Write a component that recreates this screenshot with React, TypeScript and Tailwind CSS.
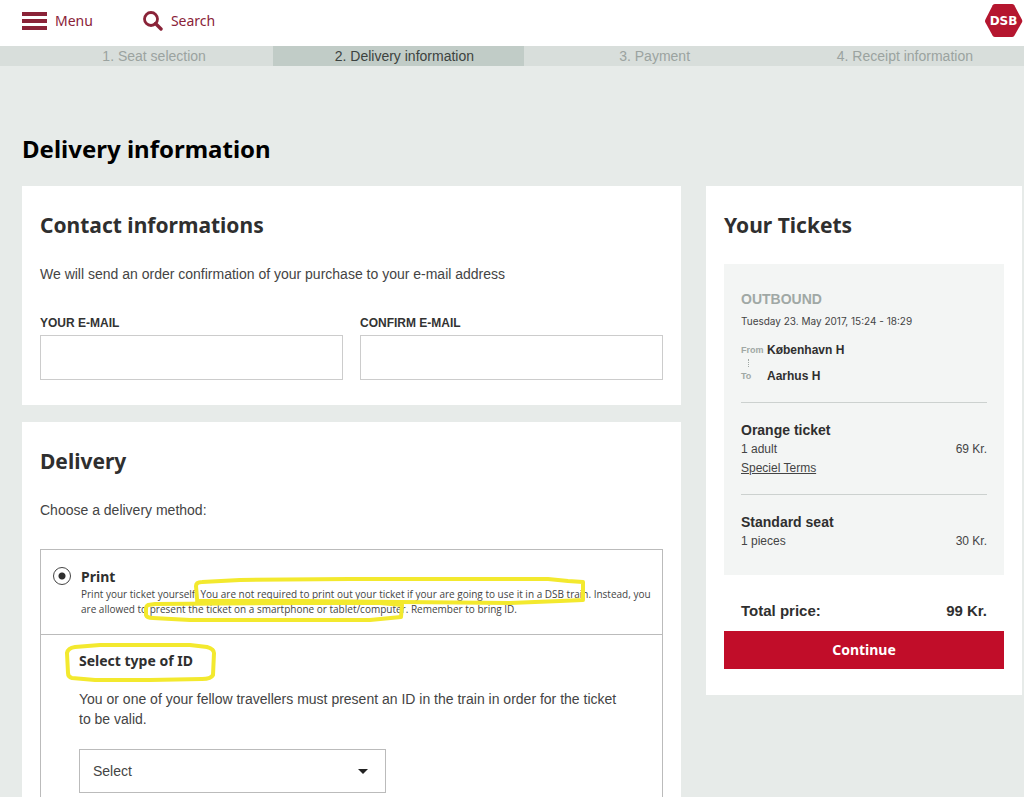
import type { ReactNode } from "react";

const STEPS = ["1. Seat selection", "2. Delivery information", "3. Payment", "4. Receipt information"];
const ACTIVE_STEP = 1;

const ITEMS = [
  { name: "Orange ticket", amount: "1 adult", price: "69 Kr.", terms: true },
  { name: "Standard seat", amount: "1 pieces", price: "30 Kr.", terms: false },
];

function Header() {
  return (
    <header className="flex h-[46px] items-center bg-white pb-[5px] pl-[22px]">
      <button type="button" className="flex items-center gap-2 text-sm leading-5 text-[#8a2338]">
        <svg width="25" height="18" viewBox="0 0 25 18" fill="currentColor" aria-hidden="true">
          <rect y="0" width="25" height="4" />
          <rect y="7" width="25" height="4" />
          <rect y="14" width="25" height="4" />
        </svg>
        Menu
      </button>
      <button type="button" className="ml-[50px] flex items-center gap-2 text-sm leading-5 text-[#8a2338]">
        <svg width="20" height="20" viewBox="0 0 20 20" fill="none" stroke="currentColor" aria-hidden="true">
          <circle cx="8" cy="8" r="6.5" strokeWidth="2.8" />
          <path d="M12.5 12.5L18 18" strokeWidth="3.4" strokeLinecap="round" />
        </svg>
        Search
      </button>
      <a href="#" aria-label="DSB" className="ml-auto">
        <svg width="40" height="34" viewBox="0 0 40 34">
          <path
            d="M11 0H28Q29.500 0 30.300 1.300L38 15.700Q38.600 17 38 18.300L30.300 31.700Q29.500 33 28 33H11Q9.500 33 8.700 31.700L1.300 18.300Q.7 17 1.300 15.700L8.700 1.300Q9.500 0 11 0Z"
            fill="#b5162f"
          />
          <text x="19.500" y="21" textAnchor="middle" fill="#fff" fontSize="12" fontWeight="700" fontFamily="'DejaVu Sans', sans-serif">
            DSB
          </text>
        </svg>
      </a>
    </header>
  );
}

function Steps() {
  return (
    <ol className="grid grid-cols-4 bg-[#d8dedb] pl-[23px] font-['Liberation_Sans',sans-serif] text-sm leading-5">
      {STEPS.map((step, i) => (
        <li
          key={step}
          className={i === ACTIVE_STEP ? "bg-[#c1ccc7] pl-3 text-center text-[#3d4340]" : "pl-3 text-center text-[#9ba3a0]"}
        >
          {step}
        </li>
      ))}
    </ol>
  );
}

function CardTitle({ children }: { children: ReactNode }) {
  return (
    <h2 className="font-['Noto_Sans',sans-serif] text-[21px] leading-8 font-bold text-[#2f2f2f]">{children}</h2>
  );
}

function EmailField({ id, label }: { id: string; label: string }) {
  return (
    <div>
      <label htmlFor={id} className="block text-xs leading-5 font-bold text-[#333] uppercase">
        {label}
      </label>
      <input id={id} type="email" className="mt-0.5 block h-[45px] w-full border border-[#ccc] bg-white px-3" />
    </div>
  );
}

/* Marker strokes drawn on top of the delivery box */
function Highlights() {
  return (
    <svg
      className="pointer-events-none absolute -top-px -left-px"
      width="560"
      height="140"
      viewBox="40 549 560 140"
      fill="none"
      stroke="#f3e92e"
      strokeWidth="4"
      strokeLinecap="round"
      strokeLinejoin="round"
      aria-hidden="true"
    >
      <path d="M197 599L196 586Q196 582 202 582L240 580L350 579H548L568 581L583 582V600L560 601L510 603L400 602L300 601L197 601" />
      <path d="M155 604L148 605Q146 606 146 609V615Q147 618 153 618L190 620H370L401 617L402 605L380 603L300 603L155 604" />
      <path d="M75 647L100 645H190L207 647Q214 649 214 653L213 675Q211 679 202 679L150 680H95L72 678Q68 677 68 673L67 653Q68 648 75 647Z" />
    </svg>
  );
}

function Delivery() {
  return (
    <section className="flex grow flex-col bg-white px-[18px] pt-[23px]">
      <CardTitle>Delivery</CardTitle>
      <p className="mt-[23px] text-sm leading-5">Choose a delivery method:</p>
      <div className="relative mt-[29px] grow border border-b-0 border-[#bbb]">
        <label className="flex gap-2.5 border-b border-[#bbb] pt-[17px] pr-1 pb-[17px] pl-3">
          <input
            type="radio"
            name="delivery"
            defaultChecked
            className="size-[18px] shrink-0 appearance-none rounded-full border border-[#444] bg-white checked:bg-[radial-gradient(circle,#2f2f2f_3px,transparent_4px)]"
          />
          <span>
            <span className="block font-['Noto_Sans',sans-serif] text-sm leading-5 font-bold text-[#2f2f2f]">Print</span>
            <span className="block font-['Open_Sans',sans-serif] text-[10px] leading-[15px]">
              Print your ticket yourself. You are not required to print out your ticket if your are going to use it in a DSB
              train. Instead, you are allowed to present the ticket on a smartphone or tablet/computer. Remember to bring ID.
            </span>
          </span>
        </label>
        <div className="px-[38px] pt-4 pb-1">
          <h3 className="font-['Noto_Sans',sans-serif] text-sm leading-5 font-bold text-[#2f2f2f]">Select type of ID</h3>
          <p className="mt-[18px] text-sm leading-5">
            You or one of your fellow travellers must present an ID in the train in order for the ticket to be valid.
          </p>
          <div className="relative mt-5 w-[307px]">
            <select
              aria-label="Select type of ID"
              className="block h-11 w-full appearance-none border border-[#bbb] bg-white px-[13px] text-sm"
            >
              <option>Select</option>
            </select>
            <svg className="pointer-events-none absolute top-5 right-[18px]" width="10" height="5" viewBox="0 0 10 5" aria-hidden="true">
              <path d="M0 0H10L5 5Z" fill="#222" />
            </svg>
          </div>
        </div>
        <Highlights />
      </div>
    </section>
  );
}

function Tickets() {
  return (
    <aside className="self-start bg-white px-[18px] pt-[23px] pb-[26px]">
      <CardTitle>Your Tickets</CardTitle>
      <div className="mt-[23px] bg-[#f3f5f4] px-[17px] pt-[25px] pb-6">
        <h3 className="text-sm leading-5 font-bold text-[#a0a8a5]">OUTBOUND</h3>
        <p className="font-[Inter,sans-serif] text-[10px] leading-6">Tuesday 23. May 2017, 15:24 - 18:29</p>
        <dl className="mt-2 grid grid-cols-[26px_1fr] pb-px text-xs leading-[18px] font-bold text-[#2f2f2f]">
          <dt className="text-[9px] text-[#a0a8a5]">From</dt>
          <dd>København H</dd>
          <dt className="col-span-2 ml-[7px] h-2 w-0 border-l border-dotted border-[#a0a8a5]" aria-hidden="true" />
          <dt className="text-[9px] text-[#a0a8a5]">To</dt>
          <dd>Aarhus H</dd>
        </dl>
        {ITEMS.map((item) => (
          <div key={item.name} className="mt-4 border-t border-[#ccd1cf] pt-[18px] text-xs leading-[19px]">
            <h4 className="text-sm leading-[19px] font-bold text-[#2f2f2f]">{item.name}</h4>
            <div className="flex justify-between">
              <span>{item.amount}</span>
              <span>{item.price}</span>
            </div>
            {item.terms && (
              <a href="#" className="underline">
                Speciel Terms
              </a>
            )}
          </div>
        ))}
      </div>
      <div className="flex justify-between px-[17px] pt-[26px] pb-[10px] text-[15px] leading-5 font-bold text-[#2f2f2f]">
        <span>Total price:</span>
        <span>99 Kr.</span>
      </div>
      <button
        type="button"
        className="h-[38px] w-full bg-[#c10d29] font-['Noto_Sans',sans-serif] text-sm font-bold text-white"
      >
        Continue
      </button>
    </aside>
  );
}

export default function App() {
  return (
    <div className="flex min-h-screen flex-col bg-[#e7ebe9] font-['Noto_Sans',sans-serif] text-[#444]">
      <Header />
      <Steps />
      <main className="flex grow flex-col pr-0.5 pl-[22px]">
        <h1 className="pt-[63px] pb-[17px] text-2xl leading-10 font-bold text-black">Delivery information</h1>
        <div className="grid grow grid-cols-[minmax(0,1fr)_316px] gap-[25px] font-['Liberation_Sans',sans-serif]">
          <div className="flex flex-col gap-[17px]">
            <section className="bg-white px-[18px] pt-[23px] pb-[25px]">
              <CardTitle>Contact informations</CardTitle>
              <p className="mt-[23px] text-sm leading-5">
                We will send an order confirmation of your purchase to your e-mail address
              </p>
              <form className="mt-[29px] grid grid-cols-2 gap-[17px]">
                <EmailField id="email" label="Your e-mail" />
                <EmailField id="confirm-email" label="Confirm e-mail" />
              </form>
            </section>
            <Delivery />
          </div>
          <Tickets />
        </div>
      </main>
    </div>
  );
}
